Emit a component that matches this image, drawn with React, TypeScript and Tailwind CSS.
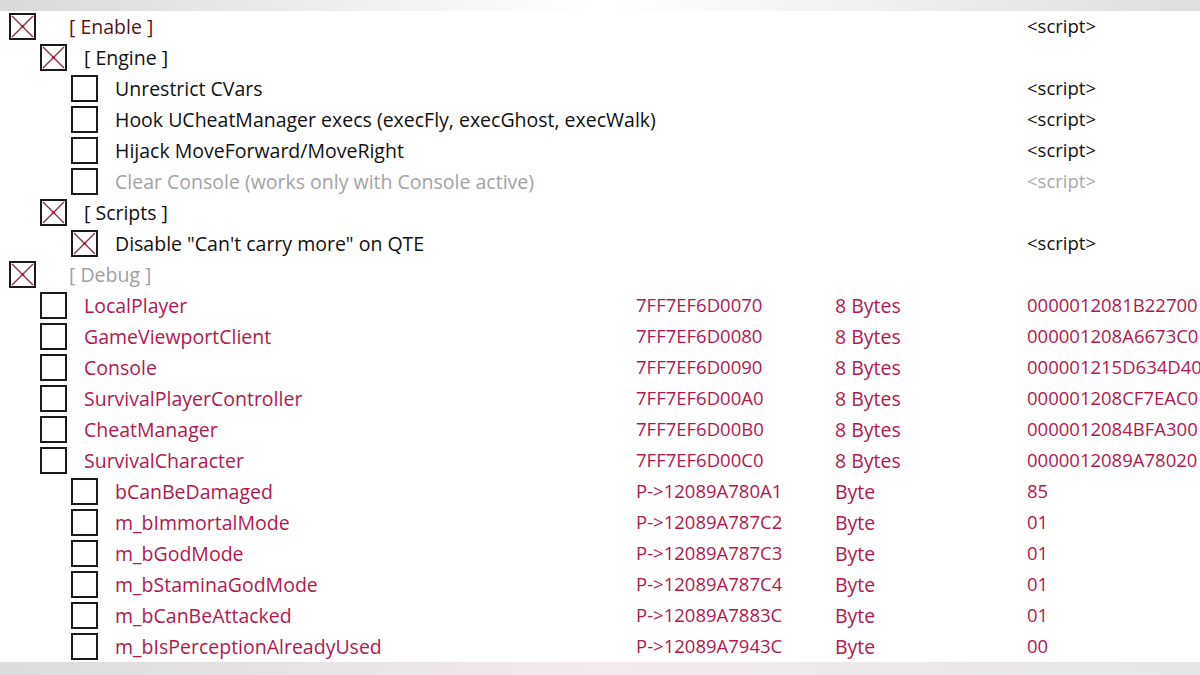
import React from "react"

type Row = {
  level: number
  name: string
  checked?: boolean
  address?: string
  type?: string
  value?: string
  tone: "group" | "black" | "gray" | "red" | "debug"
}

const rows: Row[] = [
  { level: 0, name: "[ Enable ]", checked: true, value: "<script>", tone: "group" },
  { level: 1, name: "[ Engine ]", checked: true, tone: "black" },
  { level: 2, name: "Unrestrict CVars", value: "<script>", tone: "black" },
  { level: 2, name: "Hook UCheatManager execs (execFly, execGhost, execWalk)", value: "<script>", tone: "black" },
  { level: 2, name: "Hijack MoveForward/MoveRight", value: "<script>", tone: "black" },
  { level: 2, name: "Clear Console (works only with Console active)", value: "<script>", tone: "gray" },
  { level: 1, name: "[ Scripts ]", checked: true, tone: "black" },
  { level: 2, name: "Disable \"Can't carry more\" on QTE", checked: true, value: "<script>", tone: "black" },
  { level: 0, name: "[ Debug ]", checked: true, tone: "debug" },
  { level: 1, name: "LocalPlayer", address: "7FF7EF6D0070", type: "8 Bytes", value: "0000012081B22700", tone: "red" },
  { level: 1, name: "GameViewportClient", address: "7FF7EF6D0080", type: "8 Bytes", value: "000001208A6673C0", tone: "red" },
  { level: 1, name: "Console", address: "7FF7EF6D0090", type: "8 Bytes", value: "000001215D634D40", tone: "red" },
  { level: 1, name: "SurvivalPlayerController", address: "7FF7EF6D00A0", type: "8 Bytes", value: "000001208CF7EAC0", tone: "red" },
  { level: 1, name: "CheatManager", address: "7FF7EF6D00B0", type: "8 Bytes", value: "0000012084BFA300", tone: "red" },
  { level: 1, name: "SurvivalCharacter", address: "7FF7EF6D00C0", type: "8 Bytes", value: "0000012089A78020", tone: "red" },
  { level: 2, name: "bCanBeDamaged", address: "P->12089A780A1", type: "Byte", value: "85", tone: "red" },
  { level: 2, name: "m_bImmortalMode", address: "P->12089A787C2", type: "Byte", value: "01", tone: "red" },
  { level: 2, name: "m_bGodMode", address: "P->12089A787C3", type: "Byte", value: "01", tone: "red" },
  { level: 2, name: "m_bStaminaGodMode", address: "P->12089A787C4", type: "Byte", value: "01", tone: "red" },
  { level: 2, name: "m_bCanBeAttacked", address: "P->12089A7883C", type: "Byte", value: "01", tone: "red" },
  { level: 2, name: "m_bIsPerceptionAlreadyUsed", address: "P->12089A7943C", type: "Byte", value: "00", tone: "red" }
]

const toneClass = {
  group: "text-[#5a1414]",
  black: "text-[#111111]",
  gray: "text-[#a3a3a3]",
  red: "text-[#b3174f]",
  debug: "text-[#a0a0a0]"
}

const indentClass = ["pl-[9px]", "pl-[40px]", "pl-[71px]"]

const CheckBox: React.FC<{ checked?: boolean }> = ({ checked }) => (
  <div className="w-[27px] h-[27px] shrink-0 border-2 border-[#1a1a1a] bg-white">
    {checked && (
      <svg viewBox="0 0 23 23" className="w-full h-full">
        <line x1="1" y1="1" x2="22" y2="22" stroke="#8a2a3a" strokeWidth="1.2" />
        <line x1="22" y1="1" x2="1" y2="22" stroke="#8a2a3a" strokeWidth="1.2" />
        <circle cx="11.5" cy="11.5" r="1.6" fill="#d0103a" />
      </svg>
    )}
  </div>
)

const App: React.FC = () => {
  return (
    <div
      className="w-[1200px] h-[675px] bg-white overflow-hidden flex flex-col text-[19.5px] leading-none"
      style={{ fontFamily: "'Open Sans', 'Noto Sans', sans-serif" }}
    >
      {/* top gradient strip */}
      <div className="h-[11px] shrink-0 bg-gradient-to-r from-[#d9d9d9] via-white to-[#dedede]" />
      <div className="flex-1 flex flex-col">
        {rows.map((row, i) => {
          const scriptGray = row.tone === "gray"
          return (
            <div key={i} className="h-[31px] flex items-center">
              <div className={`w-[636px] shrink-0 flex items-center ${indentClass[row.level]}`}>
                <CheckBox checked={row.checked} />
                <span
                  className={`${row.level === 0 ? "ml-[33px]" : "ml-[17px]"} whitespace-nowrap ${toneClass[row.tone]}`}
                >
                  {row.name}
                </span>
              </div>
              <div className={`w-[199px] shrink-0 whitespace-nowrap text-[18.5px] ${toneClass[row.tone]}`}>
                {row.address}
              </div>
              <div className={`w-[192px] shrink-0 whitespace-nowrap ${toneClass[row.tone]}`}>
                {row.type}
              </div>
              <div
                className={`whitespace-nowrap text-[18.5px] ${
                  row.tone === "red" ? toneClass.red : scriptGray ? "text-[#a8a8a8]" : "text-[#111111]"
                }`}
              >
                {row.value}
              </div>
            </div>
          )
        })}
      </div>
      {/* bottom gradient strip */}
      <div className="h-[14px] shrink-0 bg-gradient-to-r from-[#dcdcdc] via-[#f3e9ee] to-[#e6e6e6]" />
    </div>
  )
}

export default App
